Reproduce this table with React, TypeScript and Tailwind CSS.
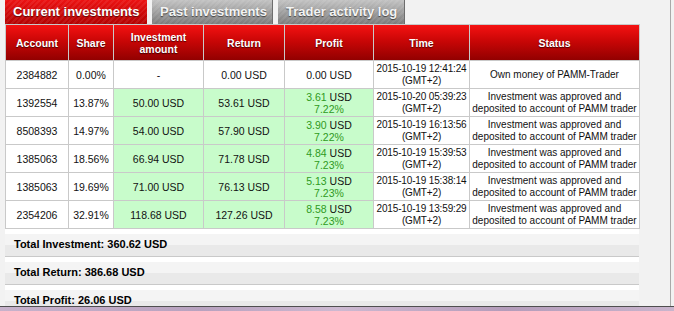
import React from "react";

type Row = {
  account: string;
  share: string;
  amount: string;
  ret: string;
  profit: string | null;
  pct: string | null;
  date: string;
  own?: boolean;
};

const rows: Row[] = [
  { account: "2384882", share: "0.00%", amount: "-", ret: "0.00 USD", profit: null, pct: null, date: "2015-10-19 12:41:24", own: true },
  { account: "1392554", share: "13.87%", amount: "50.00 USD", ret: "53.61 USD", profit: "3.61", pct: "7.22%", date: "2015-10-20 05:39:23" },
  { account: "8508393", share: "14.97%", amount: "54.00 USD", ret: "57.90 USD", profit: "3.90", pct: "7.22%", date: "2015-10-19 16:13:56" },
  { account: "1385063", share: "18.56%", amount: "66.94 USD", ret: "71.78 USD", profit: "4.84", pct: "7.23%", date: "2015-10-19 15:39:53" },
  { account: "1385063", share: "19.69%", amount: "71.00 USD", ret: "76.13 USD", profit: "5.13", pct: "7.23%", date: "2015-10-19 15:38:14" },
  { account: "2354206", share: "32.91%", amount: "118.68 USD", ret: "127.26 USD", profit: "8.58", pct: "7.23%", date: "2015-10-19 13:59:29" },
];

const totals = [
  "Total Investment: 360.62 USD",
  "Total Return: 386.68 USD",
  "Total Profit: 26.06 USD",
];

const tabBase =
  "h-[24px] flex items-center px-[8px] text-[13px] font-bold whitespace-nowrap [text-shadow:0_1px_1px_rgba(0,0,0,0.55)]";

const th =
  "border border-[#c9c9c9] px-1 text-center font-bold text-white leading-[12px] [text-shadow:0_1px_1px_rgba(0,0,0,0.6)]";

const td = "border border-[#c9c9c9] text-center leading-[12px] whitespace-nowrap";

export default function App() {
  return (
    <div
      className="w-[674px] h-[311px] overflow-hidden flex flex-col bg-[#f2f2f2] text-[#111]"
      style={{ fontFamily: '"Liberation Sans", Arial, sans-serif' }}
    >
      <div className="flex-1 flex min-h-0">
        <div className="w-[671px] border-r border-[#a9a9a9] flex flex-col min-h-0 overflow-hidden">
          {/* tabs */}
          <div className="flex gap-[5px] pl-[5px]">
            <div className={`${tabBase} w-[142px] text-white bg-[image:repeating-linear-gradient(135deg,rgba(255,255,255,0.07)_0_2px,transparent_2px_4px),linear-gradient(#ec1212,#b30202)]`}>
              Current investments
            </div>
            <div className={`${tabBase} w-[121px] text-[#f3f3f3] border-r border-[#6d6d6d] bg-[image:repeating-linear-gradient(135deg,rgba(255,255,255,0.08)_0_2px,transparent_2px_4px),linear-gradient(#c2c2c2,#7b7b7b)]`}>
              Past investments
            </div>
            <div className={`${tabBase} w-[127px] text-[#f3f3f3] border-r border-[#6d6d6d] bg-[image:repeating-linear-gradient(135deg,rgba(255,255,255,0.08)_0_2px,transparent_2px_4px),linear-gradient(#c2c2c2,#7b7b7b)]`}>
              Trader activity log
            </div>
          </div>

          {/* table */}
          <div className="pl-[5px]">
            <table className="w-[634px] table-fixed border-collapse text-[10.5px]">
              <colgroup>
                <col className="w-[63px]" />
                <col className="w-[45px]" />
                <col className="w-[90px]" />
                <col className="w-[81px]" />
                <col className="w-[89px]" />
                <col className="w-[96px]" />
                <col className="w-[170px]" />
              </colgroup>
              <thead>
                <tr className="h-[36px] bg-[linear-gradient(#f51212,#c80606_45%,#8f0000)]">
                  <th className={th}>Account</th>
                  <th className={th}>Share</th>
                  <th className={th}>
                    Investment
                    <br />
                    amount
                  </th>
                  <th className={th}>Return</th>
                  <th className={th}>Profit</th>
                  <th className={th}>Time</th>
                  <th className={th}>Status</th>
                </tr>
              </thead>
              <tbody>
                {rows.map((r, i) => (
                  <tr key={i} className="h-[28px] bg-white">
                    <td className={td}>{r.account}</td>
                    <td className={td}>{r.share}</td>
                    <td className={`${td} ${r.own ? "" : "bg-[#c8fccb]"}`}>{r.amount}</td>
                    <td className={`${td} ${r.own ? "" : "bg-[#c8fccb]"}`}>{r.ret}</td>
                    <td className={`${td} ${r.own ? "" : "bg-[#c8fccb]"}`}>
                      {r.own ? (
                        "0.00 USD"
                      ) : (
                        <>
                          <span className="text-[#2f9a22]">{r.profit}</span> USD
                          <br />
                          <span className="text-[#2f9a22]">{r.pct}</span>
                        </>
                      )}
                    </td>
                    <td className={`${td} text-[10px] tracking-[-0.15px]`}>
                      {r.date}
                      <br />
                      (GMT+2)
                    </td>
                    <td className={`${td} text-[10px]`}>
                      {r.own ? (
                        "Own money of PAMM-Trader"
                      ) : (
                        <>
                          Investment was approved and
                          <br />
                          deposited to account of PAMM trader
                        </>
                      )}
                    </td>
                  </tr>
                ))}
              </tbody>
            </table>
          </div>

          {/* totals */}
          <div className="pl-[5px] flex flex-col">
            {totals.map((t) => (
              <div
                key={t}
                className="w-[634px] h-[28px] shrink-0 border-b border-[#c9c9c9] bg-[linear-gradient(#ffffff_0_5px,#f4f4f4_5px_16px,#e9e9e9_16px)] pt-[4px] pl-[9px] flex items-center text-[11px] font-bold text-black"
              >
                {t}
              </div>
            ))}
          </div>
        </div>
      </div>
      <div className="h-px bg-[#4f4f4f]" />
      <div className="h-[4px] bg-[linear-gradient(90deg,#c7b2cb,#b8a2bf_30%,#cdb9d1_50%,#b49cba_75%,#c9b5cd)]" />
    </div>
  );
}
